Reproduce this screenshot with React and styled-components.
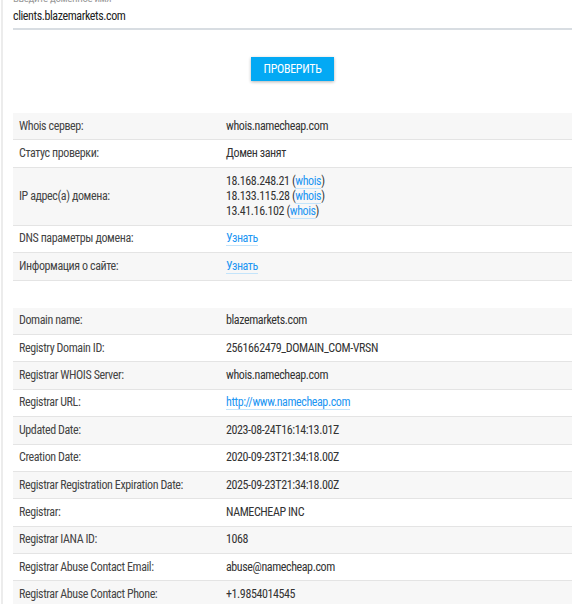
import styled, { createGlobalStyle } from 'styled-components';

const GlobalStyle = createGlobalStyle`
  html, body {
    margin: 0;
    padding: 0;
    background: #fff;
    overflow: hidden;
  }
  body {
    font-family: "Roboto Condensed", "Liberation Sans Narrow", Roboto, sans-serif;
    letter-spacing: -0.4px;
  }
`;

const Page = styled.div`
  border-left: 2px solid #ececec;
  margin-left: 1px;
  padding-left: 10px;
  min-height: 604px;
`;

const Form = styled.div`
  margin-top: -8px;
  display: flex;
  flex-direction: column;
`;

const Label = styled.label`
  font-size: 11px;
  color: #9a9a9a;
  line-height: 13px;
`;

const Input = styled.div`
  font-size: 12px;
  color: #222;
  padding: 4px 0 5px;
  border-bottom: 2px solid #d8dde2;
`;

const ButtonRow = styled.div`
  display: flex;
  justify-content: center;
  padding: 27px 0 32px;
`;

const Button = styled.button`
  background: #03a9f4;
  color: #fff;
  border: none;
  font-family: inherit;
  letter-spacing: -0.3px;
  font-size: 12px;
  text-transform: uppercase;
  width: 83px;
  height: 24px;
  box-shadow: 0 1px 3px rgba(0, 0, 0, 0.3);
  padding: 0;
`;

const Table = styled.div`
  display: flex;
  flex-direction: column;
  margin-bottom: ${({ gap }) => gap || 0}px;
`;

const Row = styled.div`
  display: grid;
  grid-template-columns: 207px 1fr;
  align-items: center;
  min-height: 26.4px;
  font-size: 12px;
  line-height: 15px;
  color: #333;
  background: ${({ odd }) => (odd ? '#f7f7f7' : '#fff')};
  border-bottom: 1px solid #e4e4e4;
`;

const Cell = styled.div`
  padding: ${({ tall }) => (tall ? '6px 6px 6px' : '0 6px')};
  color: ${({ label }) => (label ? '#444' : '#333')};
`;

const Link = styled.a`
  color: #2196f3;
  text-decoration: none;
  border-bottom: 1px solid #c3e4fb;
`;

const Whois = () => <>(<Link href="#">whois</Link>)</>;

const top = [
  ['Whois сервер:', 'whois.namecheap.com'],
  ['Статус проверки:', 'Домен занят'],
  [
    'IP адрес(а) домена:',
    <>
      18.168.248.21 <Whois />
      <br />
      18.133.115.28 <Whois />
      <br />
      13.41.16.102 <Whois />
    </>,
    true,
  ],
  ['DNS параметры домена:', <Link href="#">Узнать</Link>],
  ['Информация о сайте:', <Link href="#">Узнать</Link>],
];

const bottom = [
  ['Domain name:', 'blazemarkets.com'],
  ['Registry Domain ID:', '2561662479_DOMAIN_COM-VRSN'],
  ['Registrar WHOIS Server:', 'whois.namecheap.com'],
  ['Registrar URL:', <Link href="#">http://www.namecheap.com</Link>],
  ['Updated Date:', '2023-08-24T16:14:13.01Z'],
  ['Creation Date:', '2020-09-23T21:34:18.00Z'],
  ['Registrar Registration Expiration Date:', '2025-09-23T21:34:18.00Z'],
  ['Registrar:', 'NAMECHEAP INC'],
  ['Registrar IANA ID:', '1068'],
  ['Registrar Abuse Contact Email:', 'abuse@namecheap.com'],
  ['Registrar Abuse Contact Phone:', '+1.9854014545'],
];

const InfoTable = ({ rows, gap }) => (
  <Table gap={gap}>
    {rows.map(([k, v, tall], i) => (
      <Row key={i} odd={i % 2 === 0}>
        <Cell label>{k}</Cell>
        <Cell tall={tall}>{v}</Cell>
      </Row>
    ))}
  </Table>
);

export default function App() {
  return (
    <>
      <GlobalStyle />
      <Page>
        <Form>
          <Label>Введите доменное имя</Label>
          <Input>clients.blazemarkets.com</Input>
        </Form>
        <ButtonRow>
          <Button>Проверить</Button>
        </ButtonRow>
        <InfoTable rows={top} gap={27} />
        <InfoTable rows={bottom} />
      </Page>
    </>
  );
}
